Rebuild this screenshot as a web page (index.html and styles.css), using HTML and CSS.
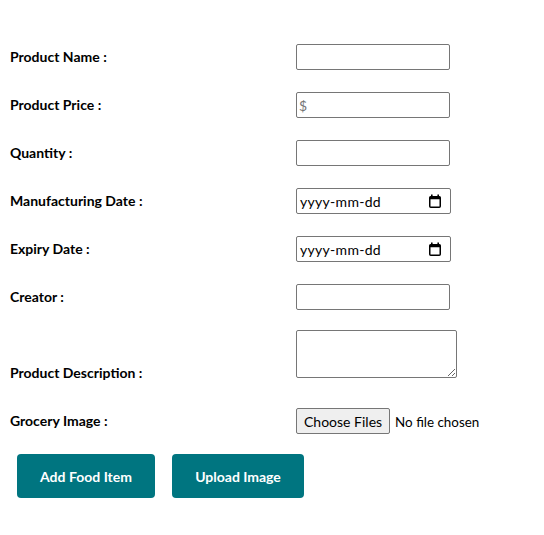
FILE: index.html
```html
<!DOCTYPE html>
<html>
<head>
<meta charset="utf-8">
<link rel="stylesheet" href="styles.css">
</head>
<body>
<form class="form">
  <div class="row">
    <label class="label">Product Name :</label>
    <input class="field" type="text">
  </div>
  <div class="row">
    <label class="label">Product Price :</label>
    <input class="field" type="text" placeholder="$">
  </div>
  <div class="row">
    <label class="label">Quantity :</label>
    <input class="field" type="text">
  </div>
  <div class="row">
    <label class="label">Manufacturing Date :</label>
    <div class="field date">
      <span class="date-text">yyyy-mm-dd</span>
      <svg class="cal" width="12" height="14" viewBox="0 0 12 14" aria-hidden="true">
        <rect x="0.75" y="2.75" width="10.5" height="10.5" rx="1" fill="none" stroke="#000" stroke-width="1.5"/>
        <rect x="0.75" y="2.75" width="10.5" height="2.5" fill="#000"/>
        <rect x="2" y="0.5" width="1.6" height="3" fill="#000"/>
        <rect x="8.4" y="0.5" width="1.6" height="3" fill="#000"/>
      </svg>
    </div>
  </div>
  <div class="row">
    <label class="label">Expiry Date :</label>
    <div class="field date">
      <span class="date-text">yyyy-mm-dd</span>
      <svg class="cal" width="12" height="14" viewBox="0 0 12 14" aria-hidden="true">
        <rect x="0.75" y="2.75" width="10.5" height="10.5" rx="1" fill="none" stroke="#000" stroke-width="1.5"/>
        <rect x="0.75" y="2.75" width="10.5" height="2.5" fill="#000"/>
        <rect x="2" y="0.5" width="1.6" height="3" fill="#000"/>
        <rect x="8.4" y="0.5" width="1.6" height="3" fill="#000"/>
      </svg>
    </div>
  </div>
  <div class="row">
    <label class="label">Creator :</label>
    <input class="field" type="text">
  </div>
  <div class="row row-area">
    <label class="label">Product Description :</label>
    <textarea class="area"></textarea>
  </div>
  <div class="row row-file">
    <label class="label">Grocery Image :</label>
    <input class="file" type="file" multiple>
  </div>
  <div class="actions">
    <button type="button" class="btn btn-add">Add Food Item</button>
    <button type="button" class="btn btn-upload">Upload Image</button>
  </div>
</form>
</body>
</html>
```

FILE: styles.css
```css
html, body {
  margin: 0;
  padding: 0;
  background: #ffffff;
}

body {
  font-family: Lato, "Noto Sans", sans-serif;
  color: #000;
}

.form {
  box-sizing: border-box;
  padding: 44px 0 0 10px;
  display: flex;
  flex-direction: column;
}

.row {
  display: flex;
  align-items: center;
  height: 26px;
  margin-bottom: 22px;
}

.label {
  width: 286px;
  flex: none;
  font-weight: 700;
  font-size: 14px;
  position: relative;
  top: -1px;
}

.field {
  box-sizing: border-box;
  width: 154px;
  height: 26px;
  margin: 0;
  font-family: Lato, "Noto Sans", sans-serif;
  font-size: 14px;
  border: 1px solid #767676;
  border-radius: 2px;
  padding: 1px 2px;
  background: #fff;
}

.field::placeholder {
  color: #757575;
}

.date {
  width: 155px;
  display: flex;
  align-items: center;
  justify-content: space-between;
  padding: 0 9px 0 3px;
}

.date-text {
  font-size: 14px;
  letter-spacing: 0.3px;
  color: #000;
}

.cal {
  display: block;
  margin-top: -1px;
}

.row-area {
  height: 48px;
  align-items: flex-end;
  margin-top: -2px;
  margin-bottom: 30px;
}

.row-area .label {
  top: 0;
  margin-bottom: -3px;
}

.area {
  box-sizing: border-box;
  width: 161px;
  height: 48px;
  margin: 0;
  border: 1px solid #767676;
  border-radius: 2px;
}

.row-file {
  margin-bottom: 20px;
}

.file {
  font-family: Lato, "Noto Sans", sans-serif;
  font-size: 13.4px;
  height: 26px;
}

.file::file-selector-button {
  box-sizing: border-box;
  height: 26px;
  padding: 0 7px;
  margin-right: 5px;
  font-family: Lato, "Noto Sans", sans-serif;
  font-size: 14px;
  background: #efefef;
  border: 1px solid #767676;
  border-radius: 2px;
  color: #000;
}

.actions {
  display: flex;
  gap: 17px;
  padding-left: 7px;
}

.btn {
  height: 44px;
  border: none;
  border-radius: 4px;
  background: #007580;
  color: #fff;
  font-family: Lato, "Noto Sans", sans-serif;
  font-weight: 700;
  font-size: 14px;
  padding: 0;
}

.btn-add {
  width: 138px;
}

.btn-upload {
  width: 132px;
}
```
